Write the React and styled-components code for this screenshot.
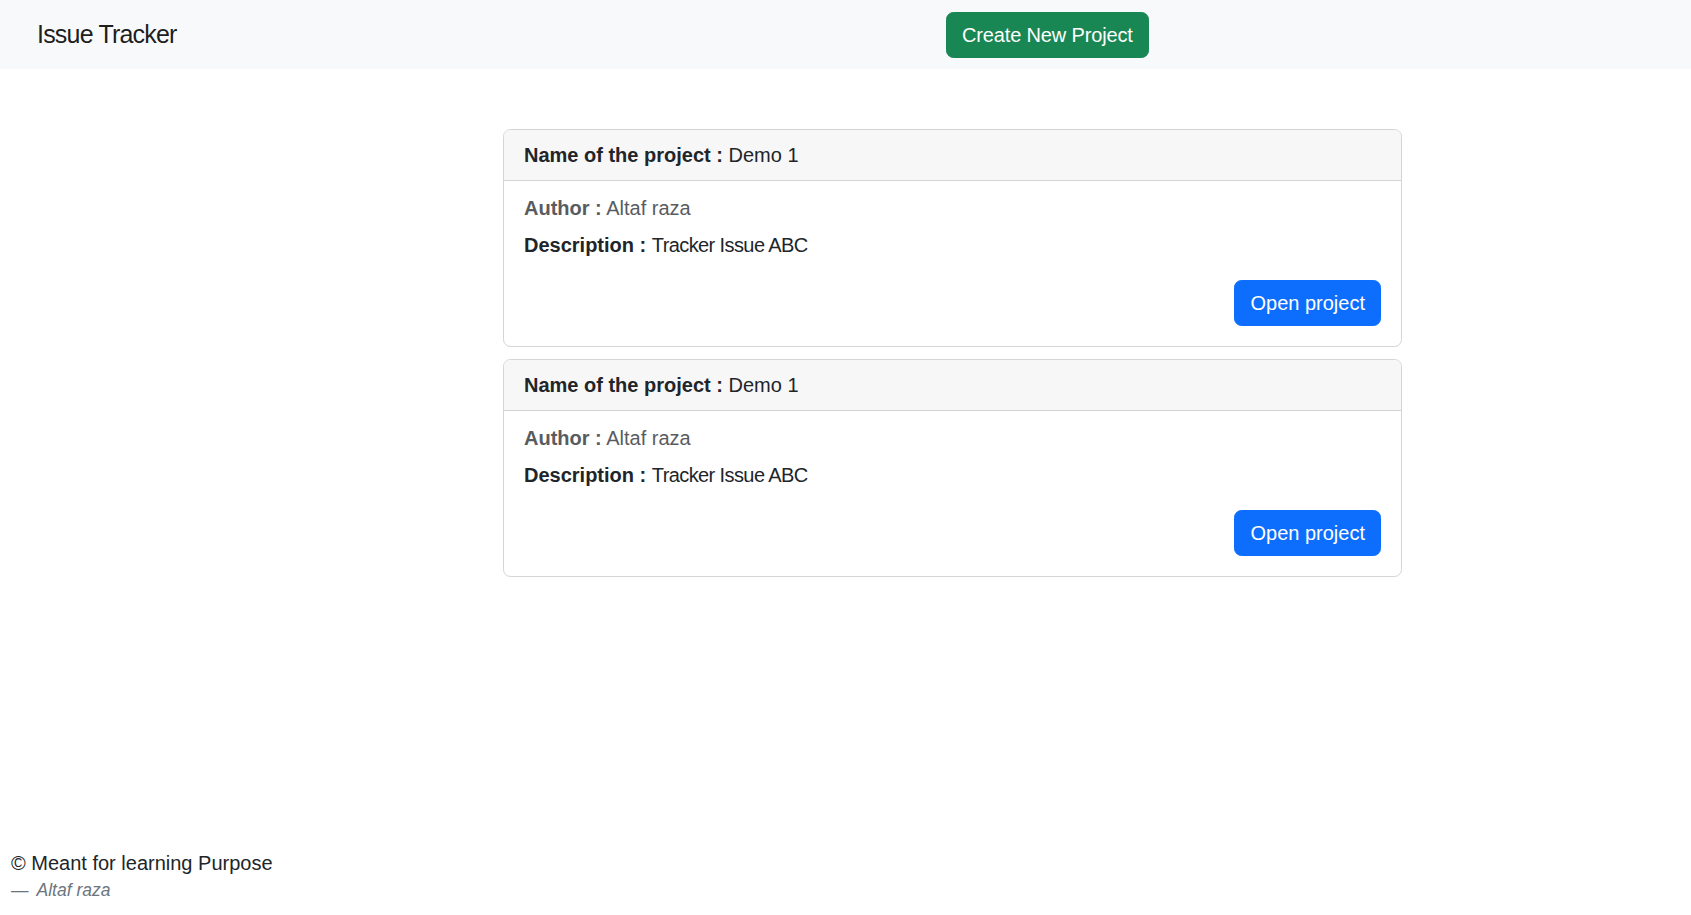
import React from 'react'
import styled, { createGlobalStyle } from 'styled-components'

const projects = [
    { id: 1, name: 'Demo 1', author: 'Altaf raza', description: 'Tracker Issue ABC' },
    { id: 2, name: 'Demo 1', author: 'Altaf raza', description: 'Tracker Issue ABC' },
]

export default function App() {
    const spreadProjects = () => {
        if (!projects || projects.length == 0) {
            return null;
        }
        return projects.map(p =>
            <Card key={p.id}>
                <CardHeader>
                    <b>Name of the project :</b> {p.name}
                </CardHeader>
                <CardBody>
                    <Subtitle><b>Author :</b> {p.author}</Subtitle>
                    <CardText><b>Description :</b> <Plain>{p.description}</Plain></CardText>
                    <Actions>
                        <Button variant="primary">Open project</Button>
                    </Actions>
                </CardBody>
            </Card>)
    }

    return (
        <Page>
            <GlobalStyle />
            <Navbar>
                <Brand>Issue Tracker</Brand>
                <div>
                    <Button variant="success">Create New Project</Button>
                </div>
            </Navbar>
            <Main>
                {spreadProjects()}
            </Main>
            <Footer>
                <Quote>© Meant for learning Purpose</Quote>
                <Caption><cite>Altaf raza</cite></Caption>
            </Footer>
        </Page>
    )
}

const GlobalStyle = createGlobalStyle`
    * { box-sizing: border-box; }
    html, body {
        margin: 0;
        padding: 0;
        background: #fff;
        color: #212529;
        font-family: "Liberation Sans", Arial, sans-serif;
        font-size: 20px;
        line-height: 1.5;
    }
`

const Page = styled.div`
    min-height: 100vh;
    display: flex;
    flex-direction: column;
`

const Navbar = styled.nav`
    display: grid;
    grid-template-columns: 909px auto;
    align-items: center;
    height: 69px;
    padding: 0 0 0 37px;
    background-color: #f8f9fa;
`

const Brand = styled.a`
    font-size: 25px;
    line-height: 37.5px;
    letter-spacing: -0.8px;
    color: rgba(0,0,0,0.9);
    text-decoration: none;
`

const Button = styled.button`
    display: inline-block;
    font-family: inherit;
    font-size: 20px;
    line-height: 30px;
    letter-spacing: ${p => p.variant == 'success' ? '-0.15px' : '0'};
    padding: 7px 15px;
    border-radius: 7.5px;
    border: 1px solid ${p => p.variant == 'success' ? '#198754' : '#0d6efd'};
    background-color: ${p => p.variant == 'success' ? '#198754' : '#0d6efd'};
    color: #fff;
    cursor: pointer;
`

const Main = styled.main`
    width: 899px;
    margin: 60px 0 0 503px;
    display: flex;
    flex-direction: column;
    gap: 12px;
`

const Card = styled.div`
    border: 1px solid #d3d4d5;
    border-radius: 7.5px;
    background: #fff;
    overflow: hidden;
`

const CardHeader = styled.div`
    padding: 10px 20px;
    background-color: #f7f7f7;
    border-bottom: 1px solid #d3d4d5;
    font-size: 20px;
    line-height: 30px;
`

const CardBody = styled.div`
    padding: 20px;
`

const Subtitle = styled.h6`
    margin: -5px 0 10px;
    font-size: 20px;
    font-weight: 500;
    line-height: 24px;
    color: #595c5f;
`

const CardText = styled.p`
    margin: 0 0 20px;
    line-height: 30px;
`

const Plain = styled.span`
    letter-spacing: -0.6px;
`

const Actions = styled.div`
    display: flex;
    justify-content: flex-end;
`

const Footer = styled.figure`
    margin: auto 0 12px;
    padding: 0 11px;
`

const Quote = styled.blockquote`
    margin: 0;
    font-size: 20px;
    line-height: 30px;
    color: #212529;
`

const Caption = styled.figcaption`
    font-size: 17.5px;
    line-height: 26px;
    color: #6c757d;
    margin-top: -1px;
    &::before {
        content: "—";
        margin-right: 8px;
    }
`
